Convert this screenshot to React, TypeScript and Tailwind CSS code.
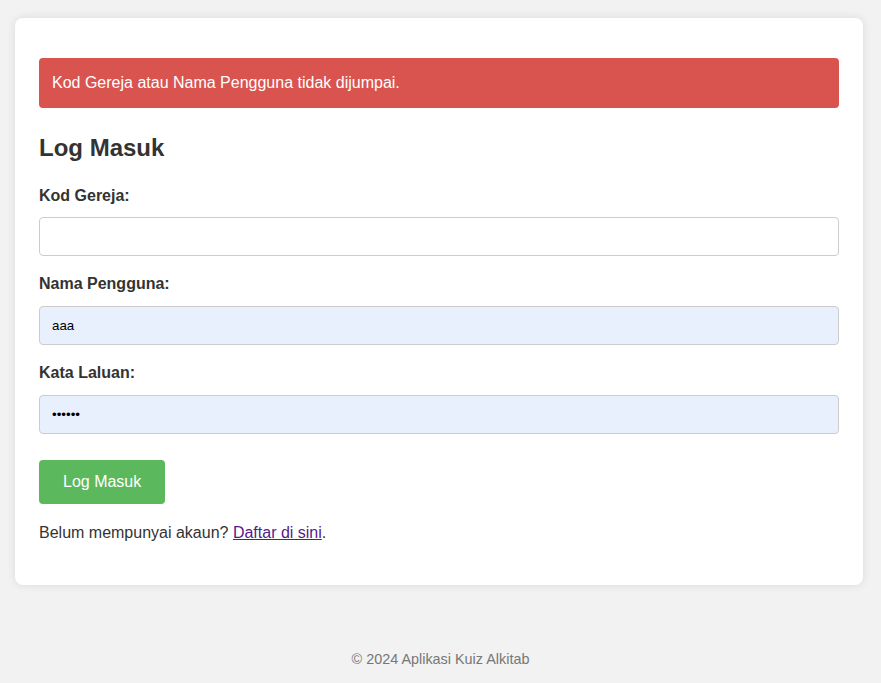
import React from "react";

export default function App() {
  return (
    <div className="min-h-[683px] bg-[#f2f2f2] pt-[18px] text-[#333] [font-family:'Liberation_Sans',Arial,sans-serif]">
      <div className="ml-[15px] w-[848px] rounded-[8px] bg-white px-6 pt-10 pb-[43px] shadow-[0_0_10px_rgba(0,0,0,0.1)]">
        <div className="flex h-[50px] items-center rounded-[4px] bg-[#d9534f] px-[13px] text-[16px] text-white">
          Kod Gereja atau Nama Pengguna tidak dijumpai.
        </div>
        <h2 className="mt-[26px] text-[24px] font-bold leading-[28px]">Log Masuk</h2>
        <form className="flex flex-col" onSubmit={(e) => e.preventDefault()}>
          <label className="mt-[25px] text-[16px] font-bold leading-[18px]">Kod Gereja:</label>
          <input
            type="text"
            className="mt-[12px] h-[39px] w-full rounded-[4px] border border-[#ccc] bg-white px-3 text-[13.33px] text-black outline-none"
          />
          <label className="mt-[19px] text-[16px] font-bold leading-[18px]">Nama Pengguna:</label>
          <input
            type="text"
            defaultValue="aaa"
            className="mt-[13px] h-[39px] w-full rounded-[4px] border border-[#ccc] bg-[#e8f0fe] px-3 text-[13.33px] text-black outline-none"
          />
          <label className="mt-[19px] text-[16px] font-bold leading-[18px]">Kata Laluan:</label>
          <input
            type="password"
            defaultValue="aaaaaa"
            className="mt-[13px] h-[39px] w-full rounded-[4px] border border-[#ccc] bg-[#e8f0fe] px-3 text-[13.33px] text-black outline-none"
          />
          <div className="mt-[26px]">
            <button
              type="submit"
              className="h-[44px] rounded-[4px] bg-[#5cb85c] px-6 text-[16px] text-white"
            >
              Log Masuk
            </button>
          </div>
        </form>
        <p className="mt-[20px] text-[16px] leading-[18px]">
          Belum mempunyai akaun?{" "}
          <a href="#" className="text-[#551a8b] underline">
            Daftar di sini
          </a>
          .
        </p>
      </div>
      <footer className="mt-[66px] text-center text-[14.4px] leading-[16px] text-[#777]">
        © 2024 Aplikasi Kuiz Alkitab
      </footer>
    </div>
  );
}
